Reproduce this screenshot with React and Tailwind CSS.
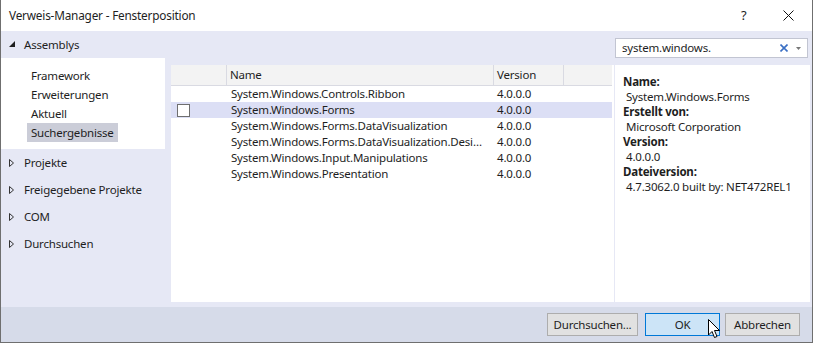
import React from 'react';

const font = { fontFamily: '"Noto Sans", "Open Sans", sans-serif' };

const rows = [
  'System.Windows.Controls.Ribbon',
  'System.Windows.Forms',
  'System.Windows.Forms.DataVisualization',
  'System.Windows.Forms.DataVisualization.Design',
  'System.Windows.Input.Manipulations',
  'System.Windows.Presentation',
];

function Closed() {
  return (
    <svg width="6" height="8" viewBox="0 0 6 8" className="mr-[9px]">
      <polygon points="0.5,0.5 4.5,4 0.5,7.5" fill="none" stroke="#333" strokeWidth="1" />
    </svg>
  );
}

function Cursor() {
  return (
    <svg width="13" height="20" viewBox="0 0 13 20" className="absolute left-[62px] top-[5px]">
      <path d="M0.5 0.5 L0.5 16 L4 12.5 L6.5 18.5 L9 17.5 L6.5 11.5 L11.5 11.5 Z" fill="#fff" stroke="#000" strokeWidth="1" strokeLinejoin="miter" />
    </svg>
  );
}

export default function App() {
  return (
    <div className="w-[813px] h-[343px] flex flex-col border-x border-b border-[#6f6f6f] text-[11.5px] tracking-[-0.2px] text-[#1e1e1e] overflow-hidden" style={font}>
      {/* title bar */}
      <div className="h-[31px] bg-white flex items-center pl-[8px] shrink-0 text-[11.8px]">
        <span className="flex-1">Verweis-Manager - Fensterposition</span>
        <span className="w-[6px] mr-[36px] text-[13px]">?</span>
        <svg width="11" height="11" viewBox="0 0 11 11" className="mr-[18px]">
          <path d="M0.5 0.5 L10.5 10.5 M10.5 0.5 L0.5 10.5" stroke="#111" strokeWidth="1" />
        </svg>
      </div>

      {/* main */}
      <div className="h-[276px] bg-[#e6e8f5] flex shrink-0">
        {/* sidebar */}
        <div className="w-[164px] flex flex-col">
          <div className="h-[27px] flex items-center pl-[8px]">
            <svg width="7" height="7" viewBox="0 0 7 7" className="mr-[8px]">
              <polygon points="6,0 6,6 0,6" fill="#1e1e1e" />
            </svg>
            <span>Assemblys</span>
          </div>
          <div className="bg-white h-[91px] pt-[8px] pl-[26px] flex flex-col">
            <div className="h-[19px] flex items-center px-[4px]">Framework</div>
            <div className="h-[19px] flex items-center px-[4px]">Erweiterungen</div>
            <div className="h-[19px] flex items-center px-[4px]">Aktuell</div>
            <div className="h-[19px] flex items-center px-[4px] bg-[#cbcdd8] self-start">Suchergebnisse</div>
          </div>
          {['Projekte', 'Freigegebene Projekte', 'COM', 'Durchsuchen'].map(t => (
            <div key={t} className="h-[27px] flex items-center pl-[8px]">
              <Closed />
              <span>{t}</span>
            </div>
          ))}
        </div>

        {/* right area */}
        <div className="ml-[6px] flex flex-col">
          <div className="h-[27px] pt-[7px] flex justify-end">
            <div className="w-[193px] h-[20px] mr-[2px] bg-white border border-[#c2c5d2] flex items-center pl-[6px] pr-[4px]">
              <span className="flex-1">system.windows.</span>
              <svg width="8" height="8" viewBox="0 0 8 8" className="mr-[8px]">
                <path d="M0.5 0.5 L7.5 7.5 M7.5 0.5 L0.5 7.5" stroke="#3a6fc4" strokeWidth="1.6" />
              </svg>
              <svg width="5" height="3" viewBox="0 0 5 3" className="mr-[2px]">
                <polygon points="0,0 5,0 2.5,3" fill="#777" />
              </svg>
            </div>
          </div>
          <div className="mt-[7px] h-[237px] flex">
            {/* table */}
            <div className="w-[443px] bg-white flex flex-col">
              <div className="h-[21px] bg-[#f3f3f3] border-b border-[#d9dae2] flex mr-[2px]">
                <div className="w-[56px] border-r border-[#d9dae2]" />
                <div className="w-[267px] border-r border-[#d9dae2] pl-[3px] flex items-center">Name</div>
                <div className="w-[70px] border-r border-[#d9dae2] pl-[3px] flex items-center">Version</div>
                <div className="flex-1" />
              </div>
              {rows.map((r, i) => (
                <div key={r} className={`h-[16px] flex items-center mr-[2px] ${i === 1 ? 'bg-[#dcdff5]' : ''}`}>
                  <div className="w-[56px] pl-[6px] flex items-center">
                    {i === 1 && <div className="w-[13px] h-[13px] border border-[#6f6f6f] bg-white" />}
                  </div>
                  <div className="w-[267px] pl-[4px] pr-[8px] whitespace-nowrap overflow-hidden text-ellipsis">{r}</div>
                  <div className="w-[70px] pl-[3px]">4.0.0.0</div>
                </div>
              ))}
            </div>
            {/* details */}
            <div className="ml-[1px] w-[195px] bg-white pt-[9px] pl-[8px] leading-[15px]">
              <div className="font-bold">Name:</div>
              <div className="pl-[3px]">System.Windows.Forms</div>
              <div className="font-bold">Erstellt von:</div>
              <div className="pl-[3px]">Microsoft Corporation</div>
              <div className="font-bold">Version:</div>
              <div className="pl-[3px]">4.0.0.0</div>
              <div className="font-bold">Dateiversion:</div>
              <div className="pl-[3px]">4.7.3062.0 built by: NET472REL1</div>
            </div>
          </div>
        </div>
      </div>

      {/* button bar */}
      <div className="flex-1 bg-[#d6dbe9] flex items-start justify-end pt-[6px] pr-[12px]">
        <button className="w-[91px] h-[23px] border border-[#adadad] bg-[#e1e1e1] flex items-center justify-center">Durchsuchen...</button>
        <button className="relative ml-[7px] w-[75px] h-[23px] border border-[#0078d7] bg-[#cce4f7] flex items-center justify-center">
          OK
          <Cursor />
        </button>
        <button className="ml-[5px] w-[75px] h-[23px] border border-[#adadad] bg-[#e1e1e1] flex items-center justify-center">Abbrechen</button>
      </div>
    </div>
  );
}
